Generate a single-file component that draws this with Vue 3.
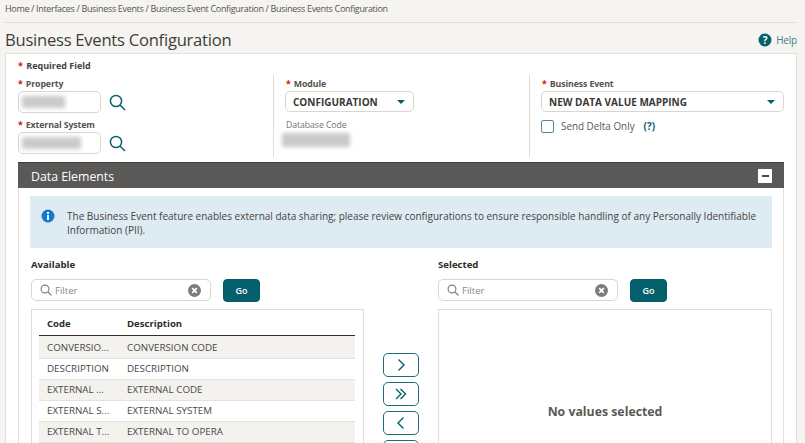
<script setup>
const crumbs = ['Home', 'Interfaces', 'Business Events', 'Business Event Configuration', 'Business Events Configuration']

const rows = [
  { code: 'CONVERSIO...', desc: 'CONVERSION CODE' },
  { code: 'DESCRIPTION', desc: 'DESCRIPTION' },
  { code: 'EXTERNAL ...', desc: 'EXTERNAL CODE' },
  { code: 'EXTERNAL S...', desc: 'EXTERNAL SYSTEM' },
  { code: 'EXTERNAL T...', desc: 'EXTERNAL TO OPERA' },
  { code: '', desc: '' },
]

const moves = [
  'M6.5 3.5l5.5 5.5-5.5 5.5',
  'M4 4l5 5-5 5M8.5 4l5 5-5 5',
  'M11.5 3.5L6 9l5.5 5.5',
  '',
]
</script>

<template>
  <div class="page">
    <div class="crumbs">{{ crumbs.join(' / ') }}</div>
    <div class="title-row">
      <h1>Business Events Configuration</h1>
      <a class="help">
        <svg width="14" height="14" viewBox="0 0 14 14">
          <circle cx="7" cy="7" r="6.5" fill="#04606d" />
          <text x="7" y="10.5" text-anchor="middle" class="help-mark">?</text>
        </svg>
        Help
      </a>
    </div>

    <div class="card">
      <div class="required"><span class="star">*</span> Required Field</div>

      <div class="form">
        <div class="col first">
          <label><span class="star">*</span> Property</label>
          <div class="lookup">
            <div class="input short"><span class="smudge w1"></span></div>
            <svg class="lens" width="17" height="17" viewBox="0 0 17 17">
              <circle cx="7" cy="7" r="5.6" />
              <path d="M11 11l5 5" />
            </svg>
          </div>
          <label class="second"><span class="star">*</span> External System</label>
          <div class="lookup">
            <div class="input short"><span class="smudge w2"></span></div>
            <svg class="lens" width="17" height="17" viewBox="0 0 17 17">
              <circle cx="7" cy="7" r="5.6" />
              <path d="M11 11l5 5" />
            </svg>
          </div>
        </div>

        <div class="col middle">
          <label><span class="star">*</span> Module</label>
          <div class="select module">CONFIGURATION<i class="caret"></i></div>
          <div class="db-label">Database Code</div>
          <span class="smudge db"></span>
        </div>

        <div class="col last">
          <label><span class="star">*</span> Business Event</label>
          <div class="select">NEW DATA VALUE MAPPING<i class="caret"></i></div>
          <div class="delta">
            <span class="check"></span>
            <span>Send Delta Only</span>
            <b>(?)</b>
          </div>
        </div>
      </div>

      <section class="panel">
        <header class="panel-head">
          <span>Data Elements</span>
          <span class="collapse"><i></i></span>
        </header>

        <div class="panel-body">
          <div class="info">
            <svg width="14" height="14" viewBox="0 0 14 14">
              <circle cx="7" cy="7" r="6.5" fill="#0f7ad0" />
              <rect x="6" y="6" width="2" height="5" fill="#fff" />
              <rect x="6" y="3" width="2" height="2" fill="#fff" />
            </svg>
            <p>The Business Event feature enables external data sharing; please review configurations to ensure responsible handling of any Personally Identifiable Information (PII).</p>
          </div>

          <div class="shuttle">
            <div class="side">
              <div class="side-title">Available</div>
              <div class="filter-row">
                <div class="filter">
                  <svg class="mini" width="12" height="12" viewBox="0 0 12 12">
                    <circle cx="5" cy="5" r="3.9" />
                    <path d="M8 8l3.5 3.5" />
                  </svg>
                  <span>Filter</span>
                  <svg class="clear" width="13" height="13" viewBox="0 0 13 13">
                    <circle cx="6.5" cy="6.5" r="6.5" fill="#7d7c7a" />
                    <path d="M4.2 4.2l4.6 4.6M8.8 4.2l-4.6 4.6" />
                  </svg>
                </div>
                <button class="go">Go</button>
              </div>
              <div class="list">
                <table>
                  <thead>
                    <tr><th class="c1">Code</th><th>Description</th></tr>
                  </thead>
                  <tbody>
                    <tr v-for="(row, i) in rows" :key="i">
                      <td>{{ row.code }}</td>
                      <td>{{ row.desc }}</td>
                    </tr>
                  </tbody>
                </table>
              </div>
            </div>

            <div class="moves">
              <button v-for="(d, i) in moves" :key="i" class="move">
                <svg width="18" height="18" viewBox="0 0 18 18"><path :d="d" /></svg>
              </button>
            </div>

            <div class="side">
              <div class="side-title">Selected</div>
              <div class="filter-row">
                <div class="filter">
                  <svg class="mini" width="12" height="12" viewBox="0 0 12 12">
                    <circle cx="5" cy="5" r="3.9" />
                    <path d="M8 8l3.5 3.5" />
                  </svg>
                  <span>Filter</span>
                  <svg class="clear" width="13" height="13" viewBox="0 0 13 13">
                    <circle cx="6.5" cy="6.5" r="6.5" fill="#7d7c7a" />
                    <path d="M4.2 4.2l4.6 4.6M8.8 4.2l-4.6 4.6" />
                  </svg>
                </div>
                <button class="go">Go</button>
              </div>
              <div class="list empty">No values selected</div>
            </div>
          </div>
        </div>
      </section>
    </div>
  </div>
</template>

<style>
html, body {
  margin: 0;
  height: 443px;
  overflow: hidden;
  background: #f5f4f1;
}
</style>

<style scoped>
.page {
  width: 805px;
  height: 443px;
  overflow: hidden;
  box-sizing: border-box;
  padding: 0 8px 0 5px;
  font-family: "Open Sans", "Noto Sans", sans-serif;
  color: #3f3d3a;
}

.crumbs {
  height: 23px;
  box-sizing: border-box;
  padding-top: 3px;
  font-size: 9px;
  letter-spacing: -0.33px;
  line-height: 12px;
  color: #55534f;
  border-bottom: 1px solid #dfddd8;
}

.title-row {
  height: 30px;
  display: flex;
  align-items: center;
  justify-content: space-between;
  padding-top: 3px;
  box-sizing: border-box;
}
h1 {
  margin: 0;
  font-size: 16.6px;
  letter-spacing: -0.25px;
  font-weight: 400;
  color: #3f3d3a;
}
.help {
  display: flex;
  align-items: center;
  gap: 4px;
  font-size: 10px;
  letter-spacing: -0.2px;
  color: #3f7f8c;
}
.help-mark {
  font: 700 10px "Open Sans", sans-serif;
  fill: #fff;
}

.card {
  background: #fff;
  border: 1px solid #e2e0db;
  border-bottom: 0;
  padding: 0 12px;
  height: 400px;
}
.required {
  padding-top: 6px;
  height: 15px;
  box-sizing: content-box;
  font-size: 9px;
  line-height: 12px;
  font-weight: 700;
  color: #45433f;
}
.star {
  color: #d80f0f;
  font-weight: 700;
  margin-right: 1px;
}

.form {
  display: grid;
  grid-template-columns: 255px 256px 1fr;
  height: 82px;
}
.col {
  display: flex;
  flex-direction: column;
  align-items: flex-start;
  padding-top: 3px;
  box-sizing: border-box;
}
.middle, .last {
  border-left: 1px solid #dedcd7;
  padding-left: 11px;
}
.middle label, .last label, .db-label {
  margin-left: 1px;
}
label {
  margin-bottom: 1px;
  font-size: 8.8px;
  letter-spacing: -0.13px;
  line-height: 12px;
  font-weight: 700;
  color: #55534f;
}
label.second {
  margin-top: 6px;
}

.lookup {
  display: flex;
  align-items: center;
  gap: 8px;
}
.input {
  height: 22px;
  box-sizing: border-box;
  border: 1px solid #d8d6d1;
  border-radius: 5px;
  display: flex;
  align-items: center;
  padding-left: 3px;
}
.short {
  width: 83px;
}
.smudge {
  display: block;
  background: #cbcac8;
  filter: blur(2px);
}
.w1 { width: 43px; height: 12px; }
.w2 { width: 59px; height: 12px; }
.db {
  width: 68px;
  height: 14px;
  margin: 2px 0 0 -3px;
}
.lens circle, .lens path {
  fill: none;
  stroke: #04606d;
  stroke-width: 1.5;
}

.select {
  position: relative;
  height: 21px;
  box-sizing: border-box;
  width: 243px;
  padding-left: 7px;
  border: 1px solid #d8d6d1;
  border-radius: 5px;
  font-size: 10px;
  line-height: 20px;
  font-weight: 700;
  color: #3a3835;
}
.module {
  width: 129px;
}
.caret {
  position: absolute;
  right: 8px;
  top: 8px;
  border: 4.5px solid transparent;
  border-top: 4.5px solid #04606d;
  border-bottom: 0;
}
.db-label {
  margin-top: 7px;
  font-size: 8.8px;
  letter-spacing: -0.12px;
  line-height: 12px;
  color: #75736f;
}
.delta {
  display: flex;
  align-items: center;
  margin-top: 7px;
  font-size: 9.9px;
  color: #5b5955;
}
.check {
  width: 13px;
  height: 13px;
  box-sizing: border-box;
  border: 1.5px solid #4e8b98;
  border-radius: 2px;
  margin-right: 7px;
}
.delta b {
  margin-left: 9px;
  color: #04606d;
}

.panel {
  margin-top: 5px;
  border-right: 1px solid #e2e0db;
  border-left: 1px solid #e2e0db;
  height: 290px;
}
.panel-head {
  height: 26px;
  box-sizing: border-box;
  margin: 0 -1px;
  padding: 1px 12px 0 13px;
  display: flex;
  align-items: center;
  justify-content: space-between;
  background: #5a5957;
  border-top: 1px solid #3f3e3c;
  color: #fff;
  font-size: 12.3px;
}
.collapse {
  width: 14px;
  height: 14px;
  margin-top: -1px;
  background: #fff;
  display: flex;
  align-items: center;
  justify-content: center;
}
.collapse i {
  width: 7px;
  height: 2px;
  background: #4a4947;
}

.panel-body {
  padding: 8px 11px 0;
}
.info {
  height: 52px;
  box-sizing: border-box;
  background: #deebf3;
  display: flex;
  align-items: flex-start;
  padding: 13px 12px 0 11px;
  gap: 12px;
}
.info svg {
  flex: none;
}
.info p {
  margin: 0;
  font-size: 10px;
  line-height: 14px;
  color: #45433f;
}

.shuttle {
  display: grid;
  grid-template-columns: 333px 1fr 334px;
  margin: 11px 0 0 1px;
}
.side-title {
  font-size: 9.6px;
  line-height: 12px;
  font-weight: 700;
  color: #2e2c29;
}
.filter-row {
  display: flex;
  gap: 12px;
  margin-top: 8px;
}
.filter {
  width: 180px;
  height: 22px;
  box-sizing: border-box;
  border: 1px solid #d8d6d1;
  border-radius: 5px;
  display: flex;
  align-items: center;
  padding: 0 9px 0 8px;
  gap: 3px;
  font-size: 9.6px;
  color: #8a8884;
}
.filter span {
  flex: 1;
}
.mini circle, .mini path {
  fill: none;
  stroke: #7d7c7a;
  stroke-width: 1.1;
}
.clear path {
  fill: none;
  stroke: #fff;
  stroke-width: 1.7;
}
.go {
  width: 37px;
  height: 23px;
  padding: 0;
  border: 1px solid #045a66;
  border-radius: 4px;
  background: #04606d;
  color: #fff;
  font: 600 9px "Open Sans", sans-serif;
}

.list {
  margin-top: 7px;
  height: 200px;
  box-sizing: border-box;
  border: 1px solid #dfddd8;
  padding: 0 8px 0 7px;
}
table {
  width: 100%;
  border-collapse: collapse;
  table-layout: fixed;
}
th {
  height: 25px;
  padding: 2px 8px 0;
  box-sizing: border-box;
  text-align: left;
  font-size: 9.6px;
  font-weight: 700;
  color: #2e2c29;
  border-bottom: 1.5px solid #312f2c;
}
th.c1 {
  width: 80px;
}
td {
  height: 20px;
  padding: 0 8px;
  font-size: 9.8px;
  color: #4a4845;
  border-bottom: 1px solid #e4e2dd;
  white-space: nowrap;
  overflow: hidden;
}
tbody tr:nth-child(odd) td {
  background: #f3f2ef;
}
tbody tr:first-child td {
  padding-top: 2px;
}

.moves {
  display: flex;
  flex-direction: column;
  align-items: center;
  gap: 5px;
  padding-top: 94px;
}
.move {
  width: 36px;
  height: 24px;
  flex: none;
  padding: 0;
  background: #fff;
  border: 1.3px solid #1f6c79;
  border-radius: 5px;
  display: flex;
  align-items: center;
  justify-content: center;
}
.move path {
  fill: none;
  stroke: #04606d;
  stroke-width: 1.4;
}

.empty {
  padding: 92px 0 0;
  text-align: center;
  font-size: 12.3px;
  line-height: 20px;
  font-weight: 700;
  color: #5b5955;
}
</style>
